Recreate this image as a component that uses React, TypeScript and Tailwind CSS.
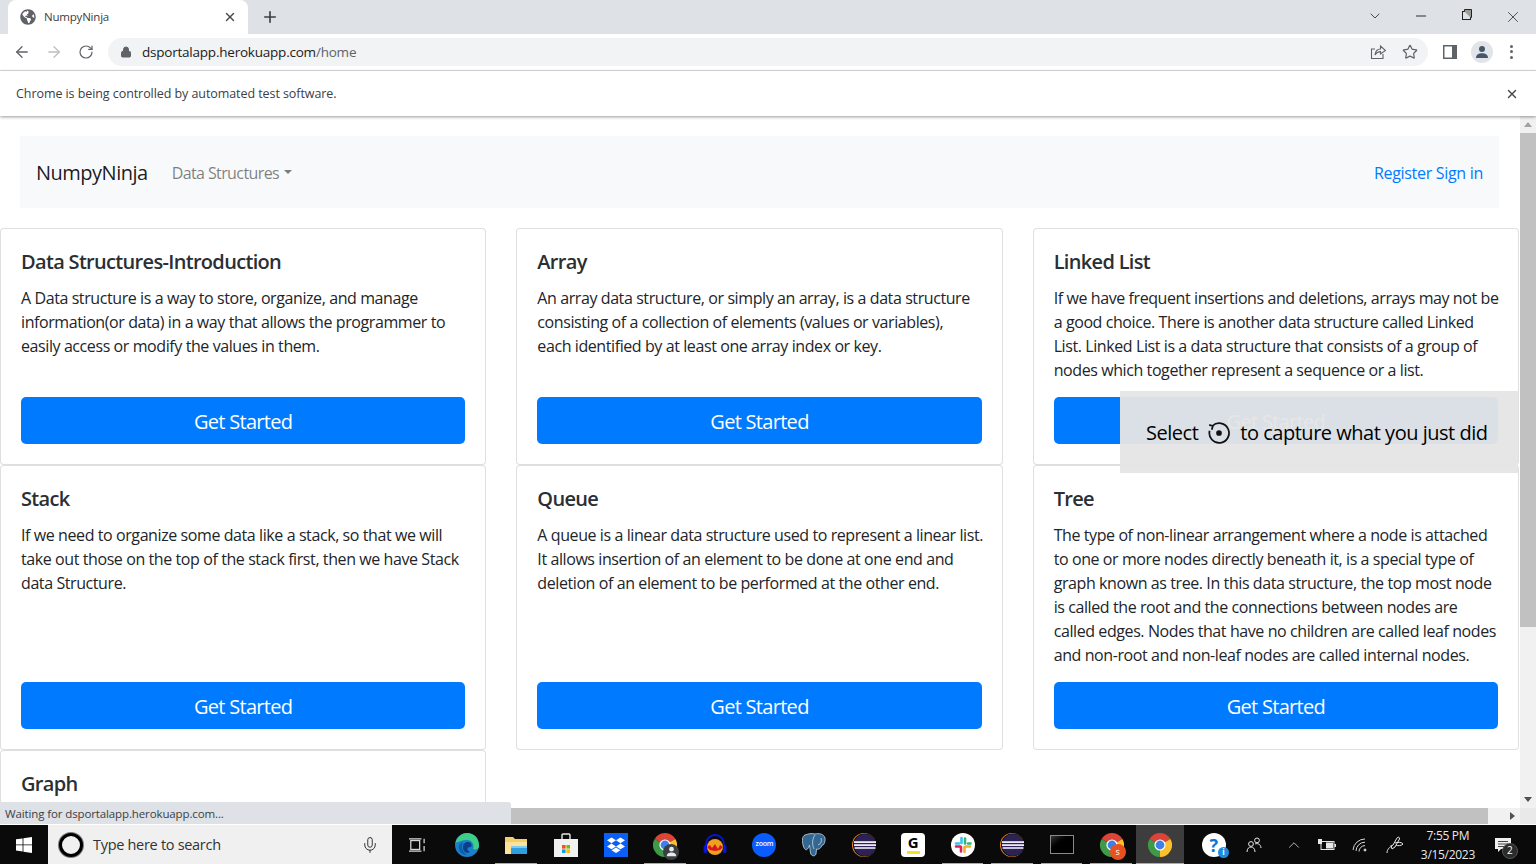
import { ArrowLeft, ArrowRight, RotateCw, Lock, Star, X, Minus, Plus, ChevronDown, ChevronUp, Mic } from "lucide-react"
import { FaGlobeAmericas } from "react-icons/fa"

const cards = [
    { title: "Data Structures-Introduction", lines: ["A Data structure is a way to store, organize, and manage", "information(or data) in a way that allows the programmer to", "easily access or modify the values in them."] },
    { title: "Array", lines: ["An array data structure, or simply an array, is a data structure", "consisting of a collection of elements (values or variables),", "each identified by at least one array index or key."] },
    { title: "Linked List", lines: ["If we have frequent insertions and deletions, arrays may not be", "a good choice. There is another data structure called Linked", "List. Linked List is a data structure that consists of a group of", "nodes which together represent a sequence or a list."] },
    { title: "Stack", lines: ["If we need to organize some data like a stack, so that we will", "take out those on the top of the stack first, then we have Stack", "data Structure."] },
    { title: "Queue", lines: ["A queue is a linear data structure used to represent a linear list.", "It allows insertion of an element to be done at one end and", "deletion of an element to be performed at the other end."] },
    { title: "Tree", lines: ["The type of non-linear arrangement where a node is attached", "to one or more nodes directly beneath it, is a special type of", "graph known as tree. In this data structure, the top most node", "is called the root and the connections between nodes are", "called edges. Nodes that have no children are called leaf nodes", "and non-root and non-leaf nodes are called internal nodes."] },
]

function Card({ title, lines }: { title: string; lines: string[] }) {
    return (
        <div className="flex flex-col rounded-[4px] border border-black/[.125] bg-white p-5">
            <h5 className="mb-[11px] pt-[1px] text-[20px] leading-6 font-semibold tracking-[-0.68px] text-[#2b2f33]">{title}</h5>
            <div className="mb-[15px] pt-[1px]">
                {lines.map((line) => (
                    <div key={line} className="text-[16px] leading-6 tracking-[-0.41px] whitespace-nowrap text-[#212529]">{line}</div>
                ))}
            </div>
            <button className="mt-auto h-[47px] w-full rounded-[5px] bg-[#007bff] pt-[2px] text-[20px] tracking-[-0.7px] text-white">Get Started</button>
        </div>
    )
}

function ChromeLogo({ size = 24 }: { size?: number }) {
    return (
        <svg width={size} height={size} viewBox="0 0 24 24">
            <path d="M12 12 L1.6 6 A12 12 0 0 1 22.4 6 Z" fill="#db4437" />
            <path d="M12 12 L22.4 6 A12 12 0 0 1 12 24 Z" fill="#fbc02d" />
            <path d="M12 12 L12 24 A12 12 0 0 1 1.6 6 Z" fill="#3e9a47" />
            <circle cx="12" cy="12" r="5.6" fill="#fff" />
            <circle cx="12" cy="12" r="4.4" fill="#3f7fe8" />
        </svg>
    )
}

function Eclipse() {
    return (
        <svg width="24" height="24" viewBox="0 0 24 24">
            <circle cx="12" cy="12" r="12" fill="#f08a1d" />
            <circle cx="12.6" cy="12" r="11.6" fill="#0a0a0a" />
            <circle cx="13" cy="12" r="11" fill="#2c2255" />
            <rect x="2" y="8.2" width="22" height="1.8" fill="#eeeaf5" />
            <rect x="2" y="11.2" width="22" height="1.8" fill="#eeeaf5" />
            <rect x="2.6" y="14.2" width="20.8" height="1.6" fill="#eeeaf5" />
        </svg>
    )
}

const Edge = (
    <svg width="24" height="24" viewBox="0 0 24 24">
        <circle cx="12" cy="12" r="12" fill="#1b7fc9" />
        <path d="M0.5 10 C2 3 8 0 12 0 C19 0 24 5 24 13 C24 16 21 17 18 16 C20 12 17 7 12 7 C7 7 3 9 0.5 10 Z" fill="#3dcf8a" />
        <path d="M8 14 C8 10 11 8.5 14 9 C17 10 17 13 16 14 C12 13.5 11 17 15 19 C12 21 8 19 8 14 Z" fill="#0b3f8c" />
        <path d="M6 20 C2 15 4 10 8 9 C6 13 7 19 12 21.5 C10 22 8 21.5 6 20 Z" fill="#0f5ca8" />
    </svg>
)
const Folder = (
    <svg width="24" height="24" viewBox="0 0 24 24">
        <path d="M1 4 H9 L11 6 H23 V21 H1 Z" fill="#f5cd6a" />
        <rect x="1" y="9" width="22" height="12" fill="#fbe49a" />
        <rect x="7" y="13" width="16" height="8" fill="#2f9fe0" />
        <rect x="7" y="13" width="16" height="2" fill="#7fcbf0" />
    </svg>
)
const Store = (
    <svg width="24" height="24" viewBox="0 0 24 24">
        <path d="M8 6 V2 a1 1 0 0 1 1 -1 H15 a1 1 0 0 1 1 1 V6" stroke="#e8e8e8" strokeWidth="1.4" fill="none" />
        <rect x="0" y="6" width="24" height="18" fill="#f1f1f1" />
        <rect x="8" y="12" width="3.6" height="3.6" fill="#f25022" />
        <rect x="12.4" y="12" width="3.6" height="3.6" fill="#7fba00" />
        <rect x="8" y="16.4" width="3.6" height="3.6" fill="#00a4ef" />
        <rect x="12.4" y="16.4" width="3.6" height="3.6" fill="#ffb900" />
    </svg>
)
const Dropbox = (
    <svg width="24" height="24" viewBox="0 0 24 24">
        <rect width="24" height="24" fill="#0a5ff7" />
        <path d="M7.5 4.5 L12 7.3 L7.5 10.2 L3 7.3 Z M16.5 4.5 L21 7.3 L16.5 10.2 L12 7.3 Z M7.5 10.6 L12 13.4 L7.5 16.2 L3 13.4 Z M16.5 10.6 L21 13.4 L16.5 16.2 L12 13.4 Z M12 14.4 L16.5 17.2 L12 20 L7.5 17.2 Z" fill="#fff" />
    </svg>
)
const Audacity = (
    <svg width="24" height="24" viewBox="0 0 24 24">
        <path d="M3 15 V11 a9 9 0 0 1 18 0 V15" stroke="#0a14d8" strokeWidth="1.8" fill="none" />
        <rect x="0.6" y="12" width="3.6" height="8" rx="1.6" fill="#0a14d8" />
        <rect x="19.8" y="12" width="3.6" height="8" rx="1.6" fill="#0a14d8" />
        <circle cx="12" cy="14" r="8" fill="#f0a020" />
        <path d="M4 14 L7 12 L9 15 L12 11 L15 16 L17 12 L20 14 L17 17 L12 18 L7 17 Z" fill="#d8161c" />
    </svg>
)
const Zoom = (
    <div className="flex h-6 w-6 items-center justify-center rounded-full bg-[#0b5cff] text-[7px] font-semibold tracking-[-0.2px] text-white">zoom</div>
)
const Elephant = (
    <svg width="24" height="24" viewBox="0 0 24 24">
        <path d="M3 2 C0 3 0 8 1 12 C2 16 4 18 5.5 16 C7 14 7 13 7.5 12 L8.5 20 C9 23 13 24 14 21 L14.5 16 C17 17 19 15 20 12 C22 13 23.5 8 23 5 C22 1 17 0 13 1 C9 0 6 1 3 2 Z" fill="#336791" stroke="#c8d8e4" strokeWidth="0.8" />
        <path d="M13 2 C10 6 10 12 12 16 M19 5 C20 8 19 11 16 12" stroke="#c8d8e4" strokeWidth="0.8" fill="none" />
    </svg>
)
const Grammarly = (
    <div className="relative flex h-6 w-6 flex-col items-center rounded-[4px] bg-white">
        <span className="mt-[2px] text-[15px] leading-[15px] font-bold text-black">G</span>
        <span className="mt-[1px] h-[3px] w-[13px] bg-[#f5e21e]" />
    </div>
)
const Slack = (
    <svg width="24" height="24" viewBox="0 0 24 24">
        <circle cx="12" cy="12" r="12" fill="#fff" />
        <g strokeWidth="2.6" strokeLinecap="round">
            <path d="M10.5 5 V10 M5 10.5 H8" stroke="#36c5f0" />
            <path d="M14 5.5 V10.5 M17 10.5 H19.5" stroke="#2eb67d" />
            <path d="M13.5 19 V14 M19 13.5 H14.5" stroke="#ecb22e" />
            <path d="M10 18.5 V14 M5 13.5 H9.5" stroke="#e01e5a" />
        </g>
    </svg>
)
const Terminal = (
    <div className="h-[19px] w-[24px] border border-[#8a8a8a] bg-gradient-to-br from-[#3a3a3a] via-black to-black" />
)

const tasks = [
    { icon: Edge, on: false },
    { icon: Folder, on: true },
    { icon: Store, on: false },
    { icon: Dropbox, on: false },
    {
        icon: (
            <div className="relative h-6 w-6">
                <ChromeLogo />
                <div className="absolute top-[11px] left-[10px] flex h-4 w-4 items-center justify-center rounded-full bg-[#3a3f44]">
                    <svg width="11" height="11" viewBox="0 0 14 14" fill="#e8e8e8">
                        <circle cx="7" cy="4" r="3" />
                        <path d="M1 13 C1 9.5 4 8.3 7 8.3 C10 8.3 13 9.5 13 13 Z" />
                    </svg>
                </div>
            </div>
        ),
        on: true,
    },
    { icon: Audacity, on: false },
    { icon: Zoom, on: false },
    { icon: Elephant, on: false },
    { icon: <Eclipse />, on: false },
    { icon: Grammarly, on: false },
    { icon: Slack, on: true },
    { icon: <Eclipse />, on: true },
    { icon: Terminal, on: true },
    {
        icon: (
            <div className="relative h-6 w-6">
                <ChromeLogo />
                <div className="absolute top-[11px] left-[10px] flex h-4 w-4 items-center justify-center rounded-full bg-[#e8501f] text-[9px] text-white">s</div>
            </div>
        ),
        on: true,
    },
]

export default function App() {
    return (
        <div className="relative flex h-[864px] w-[1536px] flex-col overflow-hidden bg-white [font-family:'Open_Sans',sans-serif]">
            {/* tab strip */}
            <div className="flex h-[34px] shrink-0 items-end bg-[#dee1e6] pl-2">
                <div className="flex h-[34px] w-[240px] items-center rounded-t-lg bg-white pr-[11px] pl-[12px] text-[#3c4043]">
                    <FaGlobeAmericas className="h-4 w-4 text-[#5f6368]" />
                    <span className="ml-[8px] flex-1 text-[11.5px] tracking-[-0.2px]">NumpyNinja</span>
                    <X className="h-[14px] w-[14px] text-[#45494d]" strokeWidth={2.4} />
                </div>
                <div className="flex h-[34px] w-[44px] items-center justify-center">
                    <Plus className="h-[18px] w-[18px] text-[#3c4043]" strokeWidth={2.2} />
                </div>
                <div className="flex-1" />
                <div className="flex h-[34px] items-start pt-2 text-[#202124]">
                    <div className="flex w-[46px] justify-center"><ChevronDown className="h-[16px] w-[16px]" strokeWidth={1.2} /></div>
                    <div className="flex w-[46px] justify-center"><Minus className="h-[16px] w-[16px]" strokeWidth={1.4} /></div>
                    <div className="flex w-[46px] justify-center">
                        <svg width="14" height="14" viewBox="0 0 14 14" fill="none" stroke="#202124">
                            <rect x="2.5" y="3.5" width="8" height="8" />
                            <path d="M4.5 3.5 V1.5 H11.5 V9.5 H10.5" fill="#9a9a9a" />
                        </svg>
                    </div>
                    <div className="flex w-[46px] justify-center"><X className="h-[18px] w-[18px]" strokeWidth={1} /></div>
                </div>
            </div>

            {/* toolbar */}
            <div className="flex h-[37px] shrink-0 items-center border-b border-[#dadce0] pb-[1px]">
                <div className="flex w-[108px] items-center text-[#5f6368]">
                    <ArrowLeft className="ml-[13px] h-[18px] w-[18px]" strokeWidth={1.7} />
                    <ArrowRight className="ml-[14px] h-[18px] w-[18px] text-[#bcbfc3]" strokeWidth={1.7} />
                    <RotateCw className="ml-[15px] h-[16px] w-[16px]" strokeWidth={1.8} />
                </div>
                <div className="flex h-[28px] w-[1320px] items-center rounded-full bg-[#f1f3f4] pl-[12px]">
                    <Lock className="h-[12px] w-[12px] fill-[#5f6368] text-[#5f6368]" strokeWidth={2} />
                    <span className="ml-[10px] pt-[2px] text-[13.5px] tracking-[-0.22px] text-[#202124]">
                        dsportalapp.herokuapp.com<span className="text-[#5f6368]">/home</span>
                    </span>
                    <div className="flex-1" />
                    <svg width="16" height="16" viewBox="0 0 16 16" fill="none" stroke="#5f6368" strokeWidth="1.1" className="mr-[16px]">
                        <path d="M13 10 V14.5 H1.5 V5 H5" />
                        <path d="M5 11 C5.5 7 8 5 10.5 5 V2 L15.5 6.5 L10.5 10 V7.6 C8 7.6 6.5 8.5 5 11 Z" />
                    </svg>
                    <Star className="mr-[10px] h-[16px] w-[16px] text-[#5f6368]" strokeWidth={1.8} />
                </div>
                <svg width="14" height="14" viewBox="0 0 14 14" className="ml-[15px]">
                    <rect width="14" height="14" fill="#5f6368" />
                    <rect x="1.5" y="1.5" width="7.5" height="11" fill="#fff" />
                </svg>
                <div className="ml-[14px] flex h-[22px] w-[22px] items-center justify-center rounded-full bg-[#e1e4e8]">
                    <svg width="14" height="14" viewBox="0 0 14 14" fill="#45556b">
                        <circle cx="7" cy="4" r="3" />
                        <path d="M1 13 C1 9.5 4 8.3 7 8.3 C10 8.3 13 9.5 13 13 Z" />
                    </svg>
                </div>
                <div className="ml-[17px] flex flex-col gap-[2.5px]">
                    <span className="h-[3px] w-[3px] rounded-full bg-[#5f6368]" />
                    <span className="h-[3px] w-[3px] rounded-full bg-[#5f6368]" />
                    <span className="h-[3px] w-[3px] rounded-full bg-[#5f6368]" />
                </div>
            </div>

            {/* automation infobar */}
            <div className="z-10 flex h-[45px] shrink-0 items-center justify-between bg-white pr-[17px] pl-4 shadow-[0_1px_3px_rgba(0,0,0,0.4)]">
                <span className="pt-[2px] text-[12.5px] tracking-[-0.07px] text-[#3c4043]">Chrome is being controlled by automated test software.</span>
                <X className="h-[14px] w-[14px] text-[#45494d]" strokeWidth={2.4} />
            </div>

            {/* page */}
            <div className="flex h-[692px] shrink-0">
                <div className="w-[1520px] overflow-hidden">
                    <div className="w-[1519px]">
                        <nav className="mx-5 mt-5 mb-5 flex h-[72px] items-center bg-[#f8f9fa] pr-4 pl-4">
                            <span className="pt-[2px] text-[20px] tracking-[-0.5px] text-black/90">NumpyNinja</span>
                            <span className="ml-[24px] pt-[2px] text-[16px] tracking-[-0.6px] text-black/50">Data Structures</span>
                            <span className="ml-[5px] border-x-[4.8px] border-t-[4.8px] border-x-transparent border-t-black/50" />
                            <div className="flex-1" />
                            <span className="pt-[2px] text-[16px] tracking-[-0.3px] text-[#007bff]">Register Sign in</span>
                        </nav>
                        <div className="grid grid-cols-3 gap-x-[30px]">
                            {cards.map((card) => (
                                <Card key={card.title} title={card.title} lines={card.lines} />
                            ))}
                            <div className="h-[237px] rounded-[4px] border border-black/[.125] bg-white p-5">
                                <h5 className="pt-[1px] text-[20px] leading-6 font-semibold tracking-[-0.68px] text-[#2b2f33]">Graph</h5>
                            </div>
                        </div>
                    </div>
                </div>
                <div className="flex w-4 flex-col bg-[#f1f1f1]">
                    <div className="flex h-[17px] items-center justify-center">
                        <span className="border-x-[4.5px] border-b-[5px] border-x-transparent border-b-[#a3a3a3]" />
                    </div>
                    <div className="h-[494px] bg-[#c1c1c1]" />
                    <div className="flex-1" />
                    <div className="flex h-[17px] items-center justify-center">
                        <span className="border-x-[4.5px] border-t-[5px] border-x-transparent border-t-[#505050]" />
                    </div>
                </div>
            </div>

            {/* horizontal scrollbar */}
            <div className="flex h-4 shrink-0 bg-[#f1f1f1]">
                <div className="w-[1488px] bg-[#c1c1c1]" />
                <div className="flex w-[32px] items-center justify-end pr-[5px]">
                    <span className="border-y-[4.5px] border-l-[5px] border-y-transparent border-l-[#505050]" />
                </div>
                <div className="flex-1 bg-[#e9e9e9]" />
            </div>

            {/* taskbar */}
            <div className="flex h-[40px] shrink-0 items-center border-t border-white bg-[#0a0a0a]">
                <div className="flex h-[40px] w-[48px] items-center justify-center">
                    <svg width="16" height="16" viewBox="0 0 16 16" fill="#fff">
                        <path d="M0 2.3 L6.6 1.4 V7.5 H0 Z M7.4 1.3 L16 0 V7.5 H7.4 Z M0 8.3 H6.6 V14.5 L0 13.6 Z M7.4 8.3 H16 V16 L7.4 14.7 Z" />
                    </svg>
                </div>
                <div className="flex h-[40px] w-[344px] items-center bg-[#f0f0f0] pr-[13px] pl-[11px]">
                    <div className="h-6 w-6 rounded-full border-[3px] border-black bg-[#f0f0f0] shadow-[0_0_0_1px_#777]" />
                    <span className="ml-[10px] flex-1 pt-[1px] text-[14.5px] tracking-[-0.3px] text-[#333]">Type here to search</span>
                    <Mic className="h-[18px] w-[18px] text-[#333]" strokeWidth={1.3} />
                </div>
                <div className="flex h-[40px] w-[49.6px] items-center justify-center">
                    <svg width="16" height="16" viewBox="0 0 18 16" fill="none" stroke="#d8d8d8" strokeWidth="1.4">
                        <rect x="2" y="3" width="10" height="10" />
                        <path d="M0 1 H14 M0 15 H14 M17 1 V6 M17 9 V15" />
                    </svg>
                </div>
                {tasks.map((task, i) => (
                    <div key={i} className="relative flex h-[40px] w-[49.6px] items-center justify-center pl-[1px]">
                        {task.icon}
                        {task.on && <div className="absolute right-1 bottom-0 left-1 h-[2px] bg-[#76b9ed]" />}
                    </div>
                ))}
                <div className="relative flex h-[40px] w-[48px] items-center justify-center bg-[#3d3d3d] pl-[1px]">
                    <ChromeLogo />
                    <div className="absolute right-0 bottom-0 left-0 h-[2px] bg-[#76b9ed]" />
                </div>
                <div className="relative ml-[18px] flex h-6 w-6 items-center justify-center rounded-full bg-white text-[18px] leading-none font-bold text-[#1272d6]">
                    ?
                    <span className="absolute -right-[3px] -bottom-[1px] flex h-[11px] w-[11px] items-center justify-center rounded-full bg-[#1e8be0] text-[8px] text-white">i</span>
                </div>
                <svg width="16" height="16" viewBox="0 0 16 16" fill="none" stroke="#e8e8e8" strokeWidth="1" className="ml-[20px]">
                    <circle cx="5" cy="7" r="2.4" />
                    <path d="M1 15 C1 11.5 3 10 5 10 C7 10 9 11.5 9 15" />
                    <circle cx="11" cy="3.4" r="2.4" />
                    <path d="M9 7 C11 6 15 7 15 11" />
                </svg>
                <ChevronUp className="ml-[23px] h-[18px] w-[18px] text-[#d8d8d8]" strokeWidth={1.1} />
                <svg width="18" height="14" viewBox="0 0 18 14" fill="none" className="ml-[15px]">
                    <rect x="3" y="3.5" width="13" height="8" stroke="#e8e8e8" />
                    <rect x="8" y="4.5" width="7" height="6" fill="#e8e8e8" />
                    <rect x="0" y="1" width="4" height="5" fill="#e8e8e8" />
                    <rect x="16.5" y="6" width="1.5" height="3" fill="#e8e8e8" />
                </svg>
                <svg width="16" height="16" viewBox="0 0 16 16" fill="none" stroke="#d8d8d8" strokeWidth="1" className="ml-[16px]">
                    <path d="M1 13 A12 12 0 0 1 13 2 M4 14 A9 9 0 0 1 13 5.2 M7 14.5 A6 6 0 0 1 13 8.6" />
                    <circle cx="13" cy="13" r="1" fill="#d8d8d8" />
                </svg>
                <svg width="18" height="18" viewBox="0 0 18 18" fill="none" stroke="#e8e8e8" strokeWidth="1" className="ml-[18px]">
                    <path d="M1 17 C1 13 4 11 7 9 L11 2 C12 0.5 14 1 13.5 3 L9 11 L6 13 L5 9 M9 7 C12 6 16 6 17 8 C15 10 12 10 10 9" />
                </svg>
                <div className="ml-[9px] flex w-[70px] flex-col items-center text-[12px] leading-[19px] tracking-[-0.3px] text-[#e8e8e8]">
                    <span>7:55 PM</span>
                    <span>3/15/2023</span>
                </div>
                <div className="relative ml-[12px]">
                    <svg width="16" height="14" viewBox="0 0 16 14">
                        <path d="M0 0 H16 V11 H6 L3 14 V11 H0 Z" fill="#f0f0f0" />
                        <path d="M3 3.5 H13 M3 6 H13 M3 8.5 H9" stroke="#444" />
                    </svg>
                    <span className="absolute top-[5px] left-[7px] flex h-[16px] w-[16px] items-center justify-center rounded-full border border-[#555] bg-[#2b2b2b] text-[10px] text-white">2</span>
                </div>
            </div>

            {/* status bubble */}
            <div className="absolute top-[802px] left-0 flex h-[22px] w-[511px] items-center rounded-tr-[3px] bg-[#dee1e6] pt-[1px] pl-[5px] text-[11.5px] tracking-[-0.12px] text-[#3c4043]">
                Waiting for dsportalapp.herokuapp.com...
            </div>

            {/* capture toast */}
            <div className="absolute top-[391px] left-[1120px] flex h-[82px] w-[398px] items-center bg-[rgba(229,229,229,0.957)] pt-[2px] pl-[26px] text-[20px] tracking-[-0.48px] text-black">
                <span>Select</span>
                <svg width="24" height="24" viewBox="0 0 22 22" fill="none" stroke="#111" strokeWidth="1.6" className="mx-[9px]">
                    <path d="M5 4.5 A9 9 0 1 1 2.4 9" />
                    <path d="M2 3.5 L5.3 4.6 L4.4 8" />
                    <circle cx="11" cy="11" r="2.6" fill="#111" stroke="none" />
                </svg>
                <span>to capture what you just did</span>
            </div>
        </div>
    )
}
